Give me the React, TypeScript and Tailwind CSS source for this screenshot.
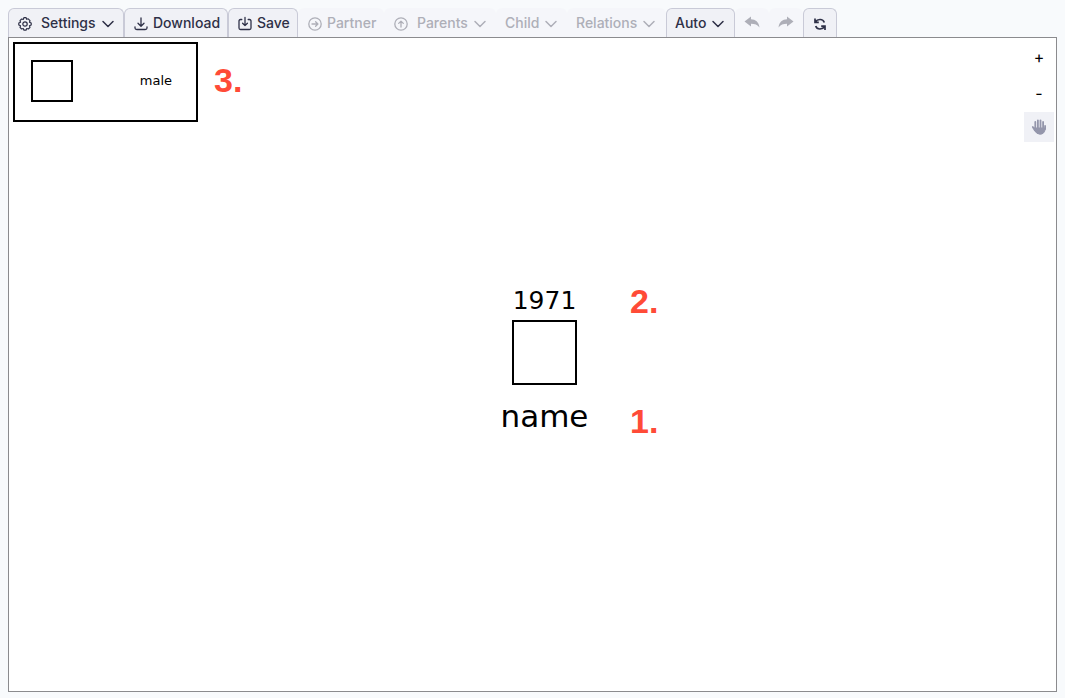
import type { ReactNode } from "react";

function Glyph({ children, strokeWidth = 1.3 }: { children: ReactNode; strokeWidth?: number }) {
  return (
    <svg
      width="16"
      height="16"
      viewBox="0 0 16 16"
      fill="none"
      stroke="currentColor"
      strokeWidth={strokeWidth}
      strokeLinecap="round"
      strokeLinejoin="round"
      className="mt-0.5 shrink-0"
      aria-hidden="true"
    >
      {children}
    </svg>
  );
}

const GearIcon = () => (
  <Glyph strokeWidth={1.2}>
    <path d="M6.900 1.700H9.100L9.700 3.300 11.200 2.800 13 4.600 12.500 6.200 14.200 7V9L12.500 9.800 13 11.400 11.400 13 9.800 12.500 9 14.200H7L6.200 12.500 4.600 13 3 11.400 3.500 9.800 1.800 9V7L3.500 6.200 3 4.600 4.600 3 6.200 3.500Z" />
    <circle cx="8" cy="8" r="2.200" />
  </Glyph>
);

const DownloadIcon = () => (
  <Glyph strokeWidth={1.3}>
    <path d="M8 2V10M5 7.300 8 10.300 11 7.300M2 10.800V12Q2 13.500 3.800 13.500H12.200Q14 13.500 14 12V10.800" />
  </Glyph>
);

const SaveIcon = () => (
  <Glyph strokeWidth={1.3}>
    <path d="M4.800 3.500H3.500Q2 3.500 2 5V12Q2 13.500 3.500 13.500H12.500Q14 13.500 14 12V5Q14 3.500 12.500 3.500H11.200M8 1.500V9.500M5.600 7.200 8 9.600 10.400 7.200" />
  </Glyph>
);

const PartnerIcon = () => (
  <Glyph>
    <circle cx="8" cy="8" r="6.200" />
    <path d="M5 8H10.800M8.600 5.700 10.900 8 8.600 10.300" />
  </Glyph>
);

const ParentsIcon = () => (
  <Glyph>
    <circle cx="8" cy="8" r="6.200" />
    <path d="M8 11V5.200M5.700 7.400 8 5.100 10.300 7.400" />
  </Glyph>
);

const ChevronIcon = () => (
  <span className="ml-1 flex">
    <Glyph strokeWidth={1.5}>
      <path d="M3 5.500 8 10.500 13 5.500" />
    </Glyph>
  </span>
);

const UndoIcon = () => (
  <svg width="16" height="14" viewBox="0 0 16 14" fill="currentColor" aria-hidden="true">
    <path d="M.5 5.500 7 .5V3.300C11.500 3.300 14.800 6 15.500 11.500 13.500 8.500 10.800 7.700 7 7.700V10.500Z" />
  </svg>
);

const RedoIcon = () => (
  <svg width="16" height="14" viewBox="0 0 16 14" fill="currentColor" aria-hidden="true">
    <path d="M15.500 5.500 9 .5V3.300C4.500 3.300 1.200 6 .5 11.500 2.500 8.500 5.200 7.700 9 7.700V10.500Z" />
  </svg>
);

const RefreshIcon = () => (
  <svg width="14" height="14" viewBox="0 0 14 14" fill="none" stroke="currentColor" strokeWidth="1.7" className="mt-0.5" aria-hidden="true">
    <path d="M2 1.500V5.300H5.800M2.300 5C4.200 2.200 9.800 1 11.300 5.500" />
    <path d="M12 13V9.200H8.200M11.700 9.500C9.800 12.300 4.200 13.500 2.700 9" />
  </svg>
);

const HandIcon = () => (
  <svg width="16" height="18" viewBox="0 0 16 18" fill="none" stroke="currentColor" strokeWidth="1.800" strokeLinecap="round" aria-hidden="true">
    <path d="M4.300 4V10M6.900 2.300V10M9.500 2.300V10M12.100 4V11M1.800 9 4 12.500M14.100 8V11" />
    <path d="M3.800 10H14V12Q13 16.200 9 16.200 5.500 16.200 3.800 12.800Z" fill="currentColor" strokeWidth="1" />
  </svg>
);

type ToolProps = {
  label?: string;
  title: string;
  icon?: ReactNode;
  menu?: boolean;
  disabled?: boolean;
  className: string;
};

function Tool({ label, title, icon, menu, disabled, className }: ToolProps) {
  const tone = disabled
    ? "border-transparent bg-[#f5f6fa] text-[#aeafb8]"
    : "border-[#c9cad7] bg-[#f0f1f6] text-[#2e3047]";
  return (
    <button
      type="button"
      aria-label={title}
      disabled={disabled}
      className={`flex h-[29px] shrink-0 items-center rounded-t-md border border-b-0 text-sm font-medium ${tone} ${className}`}
    >
      {icon}
      {label && <span>{label}</span>}
      {menu && <ChevronIcon />}
    </button>
  );
}

const noteClass = "font-['Liberation_Sans',sans-serif] text-[34px] leading-10 font-bold text-[#ff4b37]";

export default function App() {
  return (
    <main className="flex min-h-screen flex-col bg-[#f8fafc] px-2 pt-2 pb-1.5 font-['Inter',sans-serif]">
      <div role="toolbar" aria-label="Editor" className="flex">
        <Tool title="Settings" label="Settings" menu icon={<GearIcon />} className="w-[116px] gap-2 pl-2 [&>span+span]:-ml-1" />
        <Tool title="Download" label="Download" icon={<DownloadIcon />} className="w-[104px] gap-1 pl-2" />
        <Tool title="Save" label="Save" icon={<SaveIcon />} className="w-[70px] gap-1 pl-2" />
        <Tool title="Partner" label="Partner" disabled icon={<PartnerIcon />} className="w-[86px] gap-1 pl-2" />
        <Tool title="Parents" label="Parents" disabled menu icon={<ParentsIcon />} className="w-28 gap-2 pl-2 [&>span+span]:-ml-1" />
        <Tool title="Child" label="Child" disabled menu className="w-[71px] pl-2" />
        <Tool title="Relations" label="Relations" disabled menu className="w-[99px] pl-2" />
        <Tool title="Auto" label="Auto" menu className="w-[69px] pl-2" />
        <Tool title="Undo" disabled icon={<UndoIcon />} className="w-[34px] justify-center" />
        <Tool title="Redo" disabled icon={<RedoIcon />} className="w-[34px] justify-center" />
        <Tool title="Refresh" icon={<RefreshIcon />} className="w-[34px] justify-center" />
      </div>

      <section className="relative flex flex-1 items-start justify-between border border-[#8b8b8e] bg-white text-black">
        <div className="flex items-center gap-4 p-1">
          <div className="flex h-20 w-[185px] items-center justify-between border-2 border-black pr-6 pb-0.5 pl-4 font-['DejaVu_Sans',sans-serif] text-[13px]">
            <div className="size-[42px] border-2 border-black" />
            <span>male</span>
          </div>
          <span className={`${noteClass} pb-1`}>3.</span>
        </div>

        <div className="flex w-8 flex-col items-center pt-[3px] pr-0.5 text-base">
          <button type="button" aria-label="Zoom in" className="h-8 w-full">+</button>
          <button type="button" aria-label="Zoom out" className="mt-1 mb-[3px] h-8 w-full">-</button>
          <button type="button" aria-label="Pan" className="flex size-[30px] items-center justify-center bg-[#f0f1f6] text-[#9496ab]">
            <HandIcon />
          </button>
        </div>

        <div className="absolute top-[244px] left-[491px] flex w-[89px] flex-col items-center font-['DejaVu_Sans',sans-serif]">
          <span className="text-[25px] leading-[38px]">1971</span>
          <div className="size-[65px] border-2 border-black" />
          <span className="mt-2 text-[31px] leading-[46px]">name</span>
        </div>
        <span className={`${noteClass} absolute top-[243px] left-[621px]`}>2.</span>
        <span className={`${noteClass} absolute top-[363px] left-[621px]`}>1.</span>
      </section>
    </main>
  );
}
